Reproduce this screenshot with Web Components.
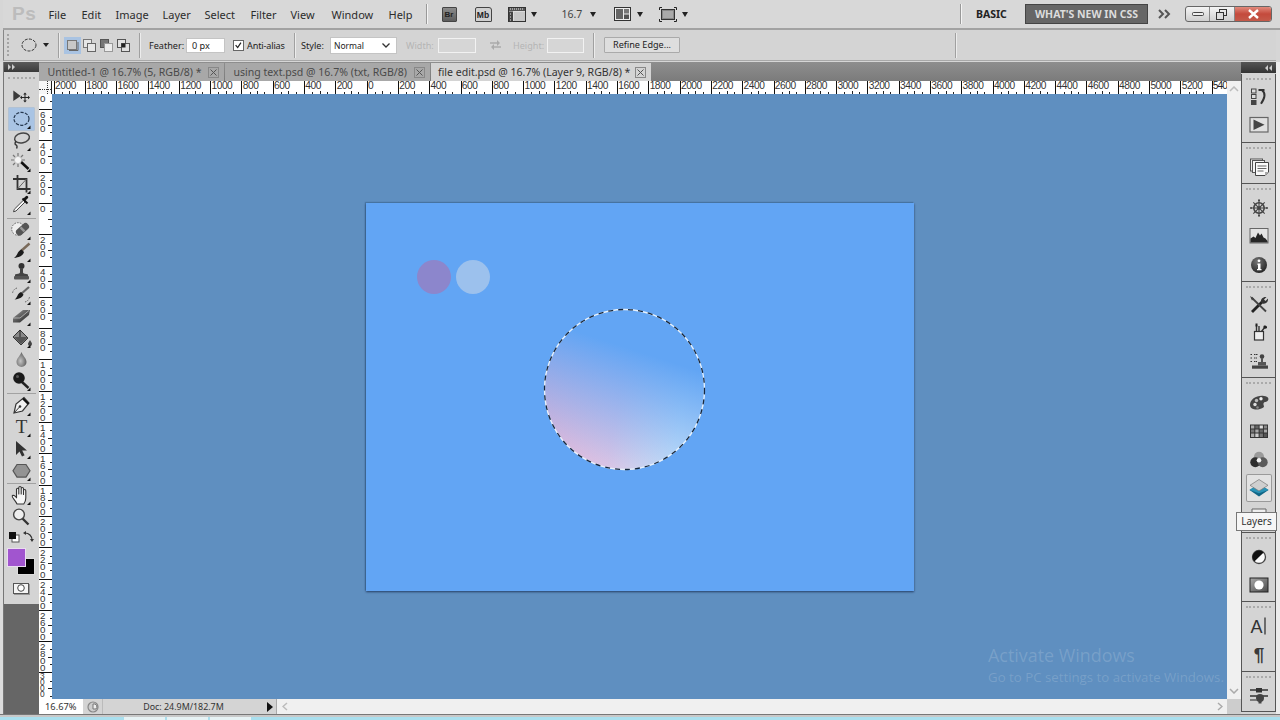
<!DOCTYPE html>
<html lang="en">
<head>
<meta charset="utf-8">
<title>Photoshop</title>
<style>
html,body{margin:0;padding:0;width:1280px;height:720px;overflow:hidden;background:#d6d6d6;font-family:"Noto Sans","Liberation Sans",sans-serif;font-size:10.5px;color:#222}
</style>
</head>
<body>
<ps-app>
  <ps-menubar>
    <ps-menu style="width:33px">File</ps-menu>
    <ps-menu style="width:34px">Edit</ps-menu>
    <ps-menu style="width:47px">Image</ps-menu>
    <ps-menu style="width:42px">Layer</ps-menu>
    <ps-menu style="width:46px">Select</ps-menu>
    <ps-menu style="width:40px">Filter</ps-menu>
    <ps-menu style="width:41px">View</ps-menu>
    <ps-menu style="width:57px">Window</ps-menu>
    <ps-menu style="width:37px">Help</ps-menu>
  </ps-menubar>
  <ps-options></ps-options>
  <ps-workspace>
    <ps-toolbox>
      <ps-tool name="move"></ps-tool>
      <ps-tool name="marquee" active more></ps-tool>
      <ps-tool name="lasso" more></ps-tool>
      <ps-tool name="wand" more></ps-tool>
      <ps-tool name="crop" more></ps-tool>
      <ps-tool name="dropper" more sep></ps-tool>
      <ps-tool name="heal" more></ps-tool>
      <ps-tool name="brush" more></ps-tool>
      <ps-tool name="stamp" more></ps-tool>
      <ps-tool name="hbrush" more></ps-tool>
      <ps-tool name="eraser" more></ps-tool>
      <ps-tool name="bucket" more></ps-tool>
      <ps-tool name="dodge"></ps-tool>
      <ps-tool name="burn" more sep></ps-tool>
      <ps-tool name="pen" more></ps-tool>
      <ps-tool name="type" more></ps-tool>
      <ps-tool name="path" more></ps-tool>
      <ps-tool name="shape" more sep></ps-tool>
      <ps-tool name="hand" more></ps-tool>
      <ps-tool name="zoom"></ps-tool>
    </ps-toolbox>
    <ps-docarea>
      <ps-tabs slot="tabs">
        <ps-tab style="width:185px">Untitled-1 @ 16.7% (5, RGB/8) *</ps-tab>
        <ps-tab style="width:205px">using text.psd @ 16.7% (txt, RGB/8)</ps-tab>
        <ps-tab style="width:220px" active>file edit.psd @ 16.7% (Layer 9, RGB/8) *</ps-tab>
      </ps-tabs>
      <ps-hruler slot="hruler"></ps-hruler>
      <ps-vruler slot="vruler"></ps-vruler>
      <ps-canvas slot="canvas"><ps-document></ps-document></ps-canvas>
      <ps-statusbar slot="status"></ps-statusbar>
    </ps-docarea>
    <ps-dock>
      <ps-dockgroup style="--pad:8.8px;height:68px"><ps-dockicon name="history"></ps-dockicon><ps-dockicon name="actions"></ps-dockicon></ps-dockgroup>
      <ps-dockgroup style="--pad:10.3px;height:40px"><ps-dockicon name="notes"></ps-dockicon></ps-dockgroup>
      <ps-dockgroup style="--pad:9.8px;height:97px"><ps-dockicon name="navigator"></ps-dockicon><ps-dockicon name="histogram"></ps-dockicon><ps-dockicon name="info"></ps-dockicon></ps-dockgroup>
      <ps-dockgroup style="--pad:7.8px;height:95px"><ps-dockicon name="tools"></ps-dockicon><ps-dockicon name="brushes"></ps-dockicon><ps-dockicon name="clone"></ps-dockicon></ps-dockgroup>
      <ps-dockgroup style="--pad:10.8px;height:154px"><ps-dockicon name="color"></ps-dockicon><ps-dockicon name="swatches"></ps-dockicon><ps-dockicon name="styles"></ps-dockicon><ps-dockicon name="layers" active></ps-dockicon><ps-dockicon name="channels"></ps-dockicon></ps-dockgroup>
      <ps-dockgroup style="--pad:9.8px;height:68px"><ps-dockicon name="adjust"></ps-dockicon><ps-dockicon name="masks"></ps-dockicon></ps-dockgroup>
      <ps-dockgroup style="--pad:9.8px;height:69px"><ps-dockicon name="char"></ps-dockicon><ps-dockicon name="para"></ps-dockicon></ps-dockgroup>
      <ps-dockgroup style="--pad:8.8px;height:39px"><ps-dockicon name="presets"></ps-dockicon></ps-dockgroup>
      <ps-tooltip>Layers</ps-tooltip>
    </ps-dock>
  </ps-workspace>
  <ps-taskstrip></ps-taskstrip>
</ps-app>
<script>
const CORNER='<path d="M21.5 17.5v3.5h-3.5z" fill="#111"/>';
const TOOL={
move:'<path d="M4.3 3.5v10.500l7.400-5z" fill="#3a3a3a"/><path d="M16 7v7M12.500 10.500h7" stroke="#222" fill="none"/><path d="M16 5.500l-1.800 2h3.600zM16 15.500l-1.800-2h3.600zM11 10.500l2-1.800v3.600zM21 10.500l-2-1.800v3.600z" fill="#222"/>',
marquee:'<ellipse cx="12.500" cy="10.800" rx="7.500" ry="6.500" fill="none" stroke="#26384f" stroke-width="1.200" stroke-dasharray="3.200 1.300"/>',
lasso:'<ellipse cx="13" cy="8" rx="7.500" ry="4.800" transform="rotate(-12 13 8)" fill="none" stroke="#444" stroke-width="1.500"/><path d="M7 11.500c-1.500 1.500-1 3 0 3.500s1.500 2 .5 3.500" fill="none" stroke="#333" stroke-width="1.400"/>',
wand:'<path d="M10.500 9.500l9 8.500" stroke="#111" stroke-width="2.600"/><path d="M9 2v3M9 13v3M2 9h3M13 9h3M4 4l2 2M14 4l-2 2M4 14l2-2" stroke="#777" stroke-width="1.200"/><circle cx="9" cy="9" r="3.600" fill="#f4f4f4" stroke="#aaa" stroke-width=".6"/>',
crop:'<path d="M8.500 2v14h13M4 6h13.500v13.500" fill="none" stroke="#333" stroke-width="1.800"/><path d="M8.500 16l9-10" stroke="#666" stroke-width="1"/>',
dropper:'<path d="M16 8l-9 9-2.500.8.800-2.500 9-9z" fill="#fafafa" stroke="#444" stroke-width="1"/><path d="M13.500 4.500l5 5" stroke="#111" stroke-width="2"/><path d="M16 7l2.800-2.800a1.400 1.400 0 0 0-2-2L14 5z" fill="#111"/>',
heal:'<circle cx="9" cy="10" r="6.300" fill="#eee" stroke="#666" stroke-dasharray="1.600 1.200"/><rect x="6" y="6.800" width="15" height="7" rx="3.300" transform="rotate(-42 13.500 10.300)" fill="#555"/><path d="M11.500 8.300l4 4" stroke="#999" stroke-width="2.400"/>',
brush:'<path d="M20.500 2.500l-9 8" stroke="#7a6a5a" stroke-width="2.400"/><path d="M12.500 8.500l2.500 2.500c-1 3-3 5-10 6 2.500-1.500 3-4 4-5.500 1-1.500 2-2.500 3.500-3z" fill="#1c1c1c"/>',
stamp:'<circle cx="12.500" cy="4" r="3" fill="#333"/><path d="M11 6h3v4.500c0 1 3 1.500 5 2v1.500H6v-1.500c2-.5 5-1 5-2z" fill="#444"/><rect x="5" y="14" width="15" height="3.600" rx="1" fill="#555"/>',
hbrush:'<path d="M20 3l-8 7" stroke="#666" stroke-width="2.200"/><path d="M12 8l2.500 2.500c-1 2.500-3 4.500-9 5 2-1.200 2.800-3.500 3.500-5 .7-1.200 1.700-2 3-2.500z" fill="#1c1c1c"/><path d="M8 4c-3 1-4.500 3-4.500 6M16 18c2-.5 4-2 4.500-5" fill="none" stroke="#666" stroke-dasharray="1.500 1.200"/>',
eraser:'<defs><linearGradient id="e" x1="0" y1="0" x2="1" y2="1"><stop offset="0" stop-color="#999"/><stop offset="1" stop-color="#1c1c1c"/></linearGradient></defs><path d="M4 13L14 5h7l-1 5-9 7.500H4z" fill="url(#e)"/><path d="M4 13h7l9-7.500" fill="none" stroke="#ccc" stroke-width=".7"/>',
bucket:'<path d="M11 3l8 8-7 7-8-8z" fill="#888" stroke="#333"/><path d="M5 10h14l-7 7z" fill="#555"/><path d="M11 3v7" stroke="#222"/><path d="M21 13c-1 2-2 3-2 4a2 2 0 0 0 4 0c0-1-1-2-2-4z" fill="#444"/>',
dodge:'<defs><radialGradient id="d" cx=".4" cy=".6" r=".7"><stop offset="0" stop-color="#c4c4c4"/><stop offset="1" stop-color="#505050"/></radialGradient></defs><path d="M12.500 3c-1.500 4-5 6.500-5 10a5 5 0 0 0 10 0c0-3.500-3.500-6-5-10z" fill="url(#d)"/>',
burn:'<path d="M13 12l6.500 6" stroke="#222" stroke-width="2.400"/><circle cx="10" cy="8" r="5.800" fill="#1a1a1a"/><circle cx="8.500" cy="6.500" r="1.500" fill="#555"/>',
pen:'<path d="M5 18l2-9 8-6.500 5 5.500-6.500 8z" fill="#f2f2f2" stroke="#333" stroke-width="1.200"/><path d="M5 18l5.500-6" stroke="#333"/><circle cx="11" cy="11.500" r="1.300" fill="#333"/><path d="M14 3.500l5.500 5.500" stroke="#111" stroke-width="2.200"/>',
type:'<text x="12.500" y="17.500" text-anchor="middle" font-family="Liberation Serif,serif" font-size="19" fill="#333">T</text>',
path:'<path d="M7 3v14l3.500-3.500L13 18.500l2.600-1.200-2.400-4.800H18z" fill="#333"/>',
shape:'<path d="M8 4.500h9l4 6.300-4 6.300H8L4 10.800z" fill="#939393" stroke="#555" stroke-width="1.200"/>',
hand:'<path d="M8 20C6 16 2.800 13.500 3.200 12c.7-1.500 3-.2 4.300 1.800V5.500c0-1.700 2.300-1.700 2.300 0V10V3.800c0-1.700 2.400-1.700 2.400 0V10V4.800c0-1.700 2.300-1.700 2.300 0V10.500V6.800c0-1.700 2.300-1.700 2.300 0V14c0 2.500-.8 4.500-2 6z" fill="#f6f6f6" stroke="#333" stroke-width="1.100" stroke-linejoin="round"/>',
zoom:'<path d="M13.500 12.500l6 6" stroke="#333" stroke-width="2.400"/><circle cx="10" cy="8.500" r="5.400" fill="#eee" stroke="#444" stroke-width="1.400"/>'
};
const DOCK={
history:'<rect x="4.500" y="2" width="4.500" height="4" fill="#ddd" stroke="#444"/><rect x="4.500" y="7.500" width="4.500" height="4" fill="#ddd" stroke="#444"/><rect x="4" y="13" width="5.500" height="5" fill="#444"/><path d="M11.500 3h6M15 3.200c3.500 2.500 3 7.500-1 13.500" fill="none" stroke="#333" stroke-width="2"/>',
actions:'<rect x="3" y="2.500" width="18" height="14.500" fill="#e0e0e0" stroke="#666" stroke-width="1.200"/><path d="M6.500 4.500l11 5.200-11 5.300z" fill="#444"/>',
notes:'<rect x="3.500" y="2" width="12" height="12" fill="#eee" stroke="#555"/><rect x="5.500" y="3.500" width="12" height="12" fill="#f4f4f4" stroke="#555"/><path d="M8.500 5.500h13v9.500l-3.500 3.500H8.500z" fill="#fafafa" stroke="#444"/><path d="M10.500 9h9M10.500 11.500h9M10.500 14h6" stroke="#666"/><path d="M21.500 15h-3.500v3.500z" fill="#aaa"/>',
navigator:'<g stroke="#444" fill="none"><circle cx="12" cy="10" r="5.200" stroke-width="1.600"/><path d="M12 2v16M4 10h16M6.300 4.300l11.400 11.400M17.700 4.300L6.300 15.700" stroke-width="1.100"/></g><circle cx="12" cy="10" r="1.800" fill="#444"/><circle cx="12" cy="2.200" r="1" fill="#444"/><circle cx="12" cy="17.800" r="1" fill="#444"/><circle cx="4" cy="10" r="1" fill="#444"/><circle cx="20" cy="10" r="1" fill="#444"/>',
histogram:'<rect x="3" y="2.500" width="18" height="14.500" fill="#e4e4e4" stroke="#666"/><path d="M3.500 16.500V12.500l3-2 2 1.500L11 6.500l2 3 1.500-2 2 4 2 1 2 2.500v1.500z" fill="#262626"/>',
info:'<defs><radialGradient id="ig" cx=".4" cy=".3" r=".8"><stop offset="0" stop-color="#777"/><stop offset="1" stop-color="#1c1c1c"/></radialGradient></defs><circle cx="12" cy="10" r="8" fill="url(#ig)"/><circle cx="12" cy="5.800" r="1.400" fill="#fff"/><path d="M10.500 8.500h3V14h1v1.300h-4.500V14h1V10h-.5z" fill="#fff"/>',
tools:'<path d="M5 18L15 8" stroke="#222" stroke-width="2.800"/><path d="M4.500 3.500l14.500 14" stroke="#444" stroke-width="1.800"/><path d="M14 8c-.5-3 2-5.500 5.500-5l-2.500 2.500 1.500 1.500L21 4.500c.5 3.500-2.500 6-5.500 5z" fill="#333"/><path d="M3 2l4 2.500L5 6.500z" fill="#444"/>',
brushes:'<rect x="7.500" y="9.500" width="9" height="8.500" fill="#eee" stroke="#333" stroke-width="1.200"/><path d="M9.500 9.500V3M12 9.500V4M14.500 9.500L18 5" stroke="#333" stroke-width="1.400"/><path d="M8.500 1.500h2v3h-2zM16.500 4c2-1 4 0 3.500 2-1 1-3 1-3.500 0z" fill="#222"/>',
clone:'<path d="M3.500 3.500h2M3.500 7h2M3.500 10.500h2M7 3.500h4M7 7h3M7 10.500h3" stroke="#333" stroke-width="1.200" stroke-dasharray="1.500 .5"/><circle cx="15" cy="5.500" r="2.300" fill="#444"/><path d="M14 7h2v4h3v3.500h-8V11h3z" fill="#555"/><rect x="5" y="14.500" width="16" height="3.200" fill="#444"/>',
color:'<path d="M3 12C3 6 10 2 17 3c4.500.7 5.500 3 3.500 5-2 1.500-3.500.5-4 2.500s2 3-1 4.500c-3 2-12 3-12.500-3z" fill="#444"/><circle cx="8" cy="11.500" r="1.700" fill="#ddd"/><circle cx="9.500" cy="7.500" r="1.700" fill="#bbb"/><circle cx="14" cy="5.800" r="1.700" fill="#eee"/><circle cx="10.500" cy="14.500" r="1.300" fill="#888"/>',
swatches:'<rect x="3" y="3.500" width="18" height="13.500" fill="#333"/><g fill="#aaa"><rect x="4" y="4.500" width="3.300" height="3"/><rect x="8.300" y="4.500" width="3.300" height="3" fill="#666"/><rect x="12.600" y="4.500" width="3.300" height="3" fill="#ddd"/><rect x="16.900" y="4.500" width="3.200" height="3" fill="#888"/><rect x="4" y="8.500" width="3.300" height="3" fill="#777"/><rect x="8.300" y="8.500" width="3.300" height="3"/><rect x="12.600" y="8.500" width="3.300" height="3" fill="#666"/><rect x="16.900" y="8.500" width="3.200" height="3" fill="#aaa"/><rect x="4" y="12.500" width="3.300" height="3.500"/><rect x="8.300" y="12.500" width="3.300" height="3.500" fill="#ccc"/><rect x="12.600" y="12.500" width="3.300" height="3.500" fill="#777"/><rect x="16.900" y="12.500" width="3.200" height="3.500" fill="#555"/></g>',
styles:'<circle cx="12" cy="6.800" r="5" fill="#9a9a9a"/><circle cx="8.300" cy="12.300" r="5" fill="#2e2e2e"/><circle cx="15.700" cy="12.300" r="5" fill="#5a5a5a"/><circle cx="12" cy="10.300" r="2.300" fill="#f4f4f4"/>',
layers:'<path d="M12 6L21.500 12 12 18.500 2.500 12z" fill="#126687"/><path d="M12 6l9.500 6-9.500 3.300L2.500 12z" fill="#2a93b6"/><path d="M12 1.500l9 5.800-9 5.700-9-5.700z" fill="#cfcfcf" stroke="#777" stroke-width=".7"/>',
channels:'<path d="M5 2h14v5H5z" fill="#eee" stroke="#666"/>',
adjust:'<circle cx="12" cy="10" r="6.500" fill="#fafafa" stroke="#444" stroke-width="1.300"/><path d="M7.400 14.600A6.500 6.500 0 0 1 16.600 5.400z" fill="#111"/>',
masks:'<defs><linearGradient id="mg" x1="0" y1="0" x2="1" y2="1"><stop offset="0" stop-color="#aaa"/><stop offset="1" stop-color="#4a4a4a"/></linearGradient></defs><rect x="3" y="3" width="18" height="14" fill="url(#mg)" stroke="#222"/><circle cx="12" cy="10" r="4.600" fill="#fff"/>',
char:'<text x="3.500" y="17" font-family="Liberation Sans,sans-serif" font-size="18" fill="#333">A</text><path d="M18 1.500v17" stroke="#333" stroke-width="1.300"/>',
para:'<text x="12" y="17" text-anchor="middle" font-family="Liberation Sans,sans-serif" font-weight="bold" font-size="19" fill="#3a3a3a">¶</text>',
presets:'<path d="M3 5h7M3 11h7M16 11h5M15 5h6" stroke="#333" stroke-width="1.600"/><rect x="9" y="3" width="6" height="4.500" fill="#333"/><circle cx="13" cy="13" r="4" fill="#444"/><path d="M3 15h7" stroke="#666" stroke-width="1.600"/><rect x="11.500" y="16" width="3" height="2.500" fill="#444"/>'
};
function def(tag,html,init){
  customElements.define(tag,class extends HTMLElement{
    constructor(){super();this.attachShadow({mode:'open'}).innerHTML=html;}
    connectedCallback(){if(init)init(this);}
  });
}
def('ps-app',`<style>:host{display:flex;flex-direction:column;width:1280px;height:720px;background:#d6d6d6;position:relative;overflow:hidden}</style><slot></slot>`);

const tri=(ml)=>`<span class="tri" style="margin-left:${ml}px"></span>`;
def('ps-menubar',`<style>
:host{display:flex;align-items:center;height:28px;flex:none;border-bottom:2px solid #a2a2a2;background:#d8d8d8;margin-left:3px;font-size:11px;color:#2c2c2c}
.logo{width:45.500px;flex:none;box-sizing:border-box;padding-left:9px;font:bold 19px "Liberation Sans",sans-serif;color:#bcbcbc;letter-spacing:.5px}
.sep{flex:none;width:1px;height:20px;background:#999;box-shadow:1px 0 0 #f4f4f4}
.ic{flex:none;display:block}
.tri{flex:none;width:0;height:0;border:3.500px solid transparent;border-top:5px solid #222;border-bottom:0}
.txt{flex:none;color:#444}
.br{flex:none;width:15px;height:15px;margin-left:15px;background:linear-gradient(#8c8c8c,#5c5c5c);border:1px solid #444;box-sizing:border-box;border-radius:1px;font:bold 8px/13px "Liberation Sans",sans-serif;text-align:center;color:#222}
.mb{flex:none;width:17px;height:15px;margin-left:18px;background:#d0d0d0;border:1px solid #444;box-sizing:border-box;border-radius:2px 3px 1px 1px;font:bold 8.500px/14px "Liberation Sans",sans-serif;text-align:center;color:#222}
.basic{flex:none;font-weight:700;font-size:10.500px;color:#222;margin-left:15px;width:34px;white-space:nowrap}
.new{flex:none;width:123px;height:20px;margin-left:15px;box-sizing:border-box;background:#666;border:1px solid #444;font-weight:700;font-size:10.500px;line-height:18px;text-align:center;color:#dcdcdc;white-space:nowrap}
.win{flex:none;margin-left:13px;display:flex;height:16px;width:87px;border:1px solid #666;box-sizing:border-box;border-radius:3px;overflow:hidden;background:linear-gradient(#f4f4f4,#cfcfcf)}
.win div{display:flex;align-items:center;justify-content:center;border-right:1px solid #888}
.close{flex:1;background:linear-gradient(#e28a7c,#c44a3c 50%,#c45a4a);border:0!important}
</style>
<div class="logo">Ps</div><slot></slot>
<div class="sep"></div>
<div class="br">Br</div><div class="mb">Mb</div>
<svg class="ic" style="margin-left:16px" width="18" height="15" viewBox="0 0 18 15"><rect x=".5" y=".5" width="17" height="14" fill="#ddd" stroke="#333"/><rect x="1" y="1" width="16" height="3" fill="#555"/><rect x="1" y="4.500" width="4" height="10" fill="#444"/><rect x="6" y="5" width="11" height="9" fill="#c8c8c8"/><path d="M2 2h14M2 7h2M2 10h2M2 13h2" stroke="#eee" stroke-dasharray="1 1"/></svg>
${tri(5)}
<div class="txt" style="margin-left:25px;width:21px;font-size:10.500px">16.7</div>
${tri(7)}
<svg class="ic" style="margin-left:18px" width="17" height="14" viewBox="0 0 17 14"><rect x=".5" y=".5" width="16" height="13" fill="#eee" stroke="#333"/><rect x="2" y="2" width="7" height="10" fill="#666"/><rect x="10" y="2" width="5" height="4.500" fill="#777"/><rect x="10" y="7.500" width="5" height="4.500" fill="#555"/></svg>
${tri(6)}
<svg class="ic" style="margin-left:16px" width="18" height="15" viewBox="0 0 18 15"><path d="M.5 3V.5H3M15 .5h2.500V3M.5 12v2.500H3M15 14.500h2.500V12" fill="none" stroke="#222"/><rect x="2.500" y="2.500" width="13" height="10" fill="#888" stroke="#333"/><rect x="4" y="4" width="10" height="7" fill="#aaa"/></svg>
${tri(5)}
<div class="sep" style="margin-left:272px;width:1.500px"></div>
<div class="basic">BASIC</div>
<div class="new">WHAT'S NEW IN CSS</div>
<svg class="ic" style="margin-left:10px" width="14" height="10" viewBox="0 0 14 10"><path d="M1 1l4 4-4 4M7 1l4 4-4 4" fill="none" stroke="#555" stroke-width="2"/></svg>
<div class="win"><div style="width:23px"><svg width="12" height="6"><rect x=".5" y="1.500" width="11" height="3" rx="1" fill="#eee" stroke="#444"/></svg></div><div style="width:24px"><svg width="12" height="11"><rect x="3.500" y=".5" width="7" height="6" fill="none" stroke="#333"/><rect x=".5" y="3.500" width="7" height="7" fill="#ddd" stroke="#333"/></svg></div><div class="close"><svg width="13" height="10" viewBox="0 0 13 10"><path d="M2 1l9 8M11 1L2 9" stroke="#fff" stroke-width="2.400"/></svg></div></div>`);
def('ps-menu',`<style>:host{display:block;flex:none;white-space:nowrap}</style><slot></slot>`);

const optMode=(svg)=>`<div class="mode"><svg width="13" height="13" viewBox="0 0 13 13">${svg}</svg></div>`;
def('ps-options',`<style>
:host{display:flex;align-items:center;height:30px;flex:none;border-bottom:1px solid #a8a8a8;border-left:1px solid #888;background:#d4d4d4;margin-left:3px;margin-right:4px;font-size:9.100px;color:#222;white-space:nowrap}
.g{flex:none;width:1px;height:22px;border-left:2px dotted #a4a4a4;margin-left:3px}
.s{flex:none;width:1px;height:25px;background:#a0a0a0;box-shadow:1px 0 0 #ececec}
.t{flex:none}
.dim{color:#b4b4b4}
.mode{flex:none;width:17px;height:17px;display:flex;align-items:center;justify-content:center}
.mode.on{background:#a9c3e2}
.in{flex:none;box-sizing:border-box;height:15px;background:#fff;border:1px solid #c4c4c4;line-height:13px;padding-left:5px;font-size:9.100px}
.off{background:#d6d6d6;border:1px solid #f2f2f2}
.ck{flex:none;box-sizing:border-box;width:11px;height:11px;background:#fff;border:1px solid #666;display:block}
.sel{flex:none;box-sizing:border-box;height:17px;width:67px;background:#fff;border:1px solid #c4c4c4;display:flex;align-items:center;justify-content:space-between;padding:0 6px 0 3px;font-size:8.500px}
.btn{flex:none;box-sizing:border-box;width:76px;height:16px;border:1px solid #aaa;background:#dedede;border-radius:1px;text-align:center;line-height:13px;font-size:9.100px}
</style>
<div class="g"></div>
<svg style="margin-left:11px;flex:none" width="16" height="14" viewBox="0 0 16 14"><ellipse cx="8" cy="7" rx="7" ry="6" fill="none" stroke="#333" stroke-dasharray="3 1.300"/></svg>
<svg style="margin-left:6px;flex:none" width="6" height="4"><path d="M0 0h6L3 4z" fill="#222"/></svg>
<div class="s" style="margin-left:9px"></div>
<div class="mode on" style="margin-left:5px"><svg width="13" height="13"><rect x="1.500" y="1.500" width="9" height="9" fill="#c8c8c8" stroke="#777"/><path d="M3 11.500h9V3" stroke="#666" fill="none"/></svg></div>
${optMode('<rect x=".5" y=".5" width="8" height="8" fill="#e6e6e6" stroke="#777"/><rect x="4.500" y="4.500" width="8" height="8" fill="#e6e6e6" stroke="#666"/>')}
${optMode('<rect x=".5" y=".5" width="8" height="8" fill="#777" stroke="#555"/><rect x="4.500" y="4.500" width="8" height="8" fill="#ececec" stroke="#999"/>')}
${optMode('<rect x=".5" y=".5" width="8" height="8" fill="#e0e0e0" stroke="#555"/><rect x="4.500" y="4.500" width="8" height="8" fill="#e0e0e0" stroke="#555"/><rect x="4.500" y="4.500" width="4" height="4" fill="#222"/>')}
<div class="s" style="margin-left:7px"></div>
<div class="t" style="margin-left:9px;width:36px">Feather:</div>
<div class="in" style="margin-left:1px;width:39px">0 px</div>
<svg class="ck" style="margin-left:8px" viewBox="0 0 11 11"><path d="M2 5l2.500 3L8.500 2" fill="none" stroke="#222" stroke-width="1.500"/></svg>
<div class="t" style="margin-left:3px;width:39px;letter-spacing:-.15px">Anti-alias</div>
<div class="s" style="margin-left:8px"></div>
<div class="t" style="margin-left:6px;width:25px">Style:</div>
<div class="sel" style="margin-left:4px"><span>Normal</span><svg width="8" height="5"><path d="M.5 .5L4 4 7.500 .5" fill="none" stroke="#333" stroke-width="1.300"/></svg></div>
<div class="t dim" style="margin-left:9px;width:27px">Width:</div>
<div class="in off" style="margin-left:5px;width:38px"></div>
<svg style="margin-left:14px;flex:none" width="11" height="10" viewBox="0 0 11 10"><path d="M0 3h8M11 7H3" stroke="#aaa" stroke-width="1.400"/><path d="M7 0l3 3-3 3zM4 4L1 7l3 3z" fill="#aaa"/></svg>
<div class="t dim" style="margin-left:12px;width:30px">Height:</div>
<div class="in off" style="margin-left:4px;width:37px"></div>
<div class="s" style="margin-left:9px"></div>
<div class="btn" style="margin-left:10px">Refine Edge...</div>
<div class="s" style="margin-left:275px"></div>`);

def('ps-workspace',`<style>
:host{display:flex;flex:1;min-height:0;padding-top:1px;box-sizing:border-box}
.edge{flex:none;width:3px;background:#dcdcdc;border-right:1px solid #777;box-sizing:content-box}
.edge2{flex:none;width:4px;background:#ececec}
</style><div class="edge"></div><slot></slot><div class="edge2"></div>`);

def('ps-toolbox',`<style>
:host{display:flex;flex-direction:column;flex:none;width:34.500px;margin-right:.5px;background:#666}
.h{height:10px;flex:none;background:linear-gradient(#5a5a5a,#3a3a3a);display:flex;align-items:center;padding-left:4px}
.b{flex:none;background:#d4d4d4;height:532px;box-sizing:border-box;padding-top:3.500px;display:flex;flex-direction:column}
.grip{height:2px;flex:none;margin:1px 4px 8px;border-top:2px dotted #aaa;box-sizing:border-box}
.tools{flex:none;display:flex;flex-direction:column;margin-left:5px;width:25px}
.row{flex:none;display:flex;align-items:center;height:13px;margin-top:3.500px;margin-left:4px}
.sw{flex:none;position:relative;height:27px;margin-top:4px;margin-left:3px}
.fg,.bgc{position:absolute;box-sizing:border-box}
.bgc{left:10px;top:10px;width:18px;height:17px;background:#000;border:1px solid #ddd}
.fg{left:0;top:0;width:19px;height:19px;background:#a155cf;border:1px solid #eadcf0}
.qm{flex:none;width:16px;height:11px;margin:8px 0 0 9px;box-sizing:border-box;border:1px solid #555;background:#f4f4f4;display:flex;align-items:center;justify-content:center;box-shadow:1px 1px 0 #999}
</style>
<div class="h"><svg width="8" height="6"><path d="M0 0l3 3-3 3zM4 0l3 3-3 3z" fill="#ccc"/></svg></div>
<div class="b"><div class="grip"></div><div class="tools"><slot></slot></div>
<div class="row"><svg width="26" height="13" viewBox="0 0 26 13"><rect x="4" y="4" width="7" height="7" fill="#fff" stroke="#555"/><rect x="1" y="1" width="7" height="7" fill="#111"/><path d="M17 2c4 0 7 3 7 7" fill="none" stroke="#333" stroke-width="1.200"/><path d="M15 2l3-2v4zM24 11l-2-3h4z" fill="#333"/></svg></div>
<div class="sw"><div class="bgc"></div><div class="fg"></div></div>
<div class="qm"><svg width="8" height="8"><circle cx="4" cy="4" r="3.300" fill="#fff" stroke="#444"/></svg></div>
</div>`);

def('ps-tool',`<style>
:host{display:block;flex:none;height:21.600px;width:25px}
:host([active]){background:#a9c4e4;box-shadow:0 0 0 .5px #8fb0d4}
:host([sep]){height:24.600px}
svg{display:block}
.l{height:1px;background:#a2a2a2;margin:1.500px -2px 0}
</style><svg width="25" height="21.600" viewBox="0 0 25 21.600" id="s"></svg><div class="l" id="l"></div>`,(el)=>{
  const n=el.getAttribute('name');
  el.shadowRoot.getElementById('s').innerHTML=TOOL[n]+(el.hasAttribute('more')?CORNER:'');
  if(!el.hasAttribute('sep')){const l=el.shadowRoot.getElementById('l');if(l)l.remove();}
});

def('ps-docarea',`<style>
:host{display:grid;flex:none;width:1202px;grid-template-columns:13px 1175px 14px;grid-template-rows:19px 13px 605px 15px}
::slotted([slot=tabs]){grid-column:1/4;grid-row:1}
::slotted([slot=hruler]){grid-column:1/3;grid-row:2}
::slotted([slot=vruler]){grid-column:1;grid-row:3}
::slotted([slot=canvas]){grid-column:2;grid-row:3}
::slotted([slot=status]){grid-column:1/4;grid-row:4}
.vs{grid-column:3;grid-row:2/4;background:#f0f0f0;display:flex;flex-direction:column;justify-content:space-between;align-items:center;padding:5px 0 5px;box-sizing:border-box}
</style>
<slot name="tabs"></slot><slot name="hruler"></slot><slot name="vruler"></slot><slot name="canvas"></slot>
<div class="vs"><svg width="10" height="6"><path d="M1 5l4-4 4 4" fill="none" stroke="#bbb" stroke-width="1.500"/></svg><svg width="10" height="6"><path d="M1 1l4 4 4-4" fill="none" stroke="#aaa" stroke-width="1.500"/></svg></div>
<slot name="status"></slot>`);

def('ps-tabs',`<style>:host{display:flex;background:linear-gradient(#8e8e8e,#7b7b7b);padding-top:1px;box-sizing:border-box;gap:1px}</style><slot></slot>`);
def('ps-tab',`<style>
:host{display:flex;flex:none;align-items:center;justify-content:space-between;box-sizing:border-box;height:18px;padding:0 5px 0 8.500px;background:#a8a8a8;font-size:10.550px;color:#4a4a4a;white-space:nowrap}
:host([active]){background:#d4d4d4;color:#333;padding-left:7px}
.x{flex:none;box-sizing:border-box;width:11px;height:11px;border:1px solid #888;display:flex;align-items:center;justify-content:center}
</style><span><slot></slot></span><span class="x"><svg width="7" height="7"><path d="M.5 .5l6 6M6.500 .5l-6 6" stroke="#555"/></svg></span>`);

def('ps-hruler',`<style>
:host{display:flex;background:#fff;overflow:hidden;box-sizing:border-box}
.c{flex:none;width:13px;height:13px;position:relative;background:#f6f6f6;border-right:1px solid #222;box-sizing:border-box}
.c:before{content:"";position:absolute;left:0;right:0;top:8px;border-top:1px dotted #333}
.c:after{content:"";position:absolute;top:0;bottom:0;left:8px;border-left:1px dotted #333}
.r{flex:1;display:flex;padding-left:1.700px;min-width:0}
.u{flex:none;box-sizing:border-box;width:31.300px;height:13px;border-left:1px solid #111;padding-left:.3px;font:10.200px/10px "Liberation Sans",sans-serif;letter-spacing:-.45px;color:#333;white-space:nowrap;
background:linear-gradient(#222,#222) 25% 100%/1px 2px no-repeat,linear-gradient(#222,#222) 50% 100%/1px 3px no-repeat,linear-gradient(#222,#222) 75% 100%/1px 2px no-repeat}
.u.last{width:14.500px;background:none;letter-spacing:-.85px;padding-left:0;color:#222}
</style><div class="c"></div><div class="r" id="r"></div>`,(el)=>{
  let h='';for(let k=0;k<37;k++)h+=`<div class="u">${Math.abs(2000-200*k)}</div>`;
  h+='<div class="u last">540</div>';
  el.shadowRoot.getElementById('r').innerHTML=h;
});
def('ps-vruler',`<style>
:host{display:block;background:#fff;overflow:hidden}
.u{box-sizing:border-box;height:31.300px;border-top:1px solid #111;width:13px;padding:1px 0 0 1px;font:9.800px/7.100px "Liberation Sans",sans-serif;color:#333;
background:linear-gradient(#222,#222) 100% 25%/2px 1px no-repeat,linear-gradient(#222,#222) 100% 50%/4px 1px no-repeat,linear-gradient(#222,#222) 100% 75%/2px 1px no-repeat}
.u.top{height:15.100px;border-top:0;background:linear-gradient(#222,#222) 100% 50%/2px 1px no-repeat}
.u.end{height:26.700px;font-size:8.400px;line-height:5.900px;background:linear-gradient(#222,#222) 100% 30%/2px 1px no-repeat,linear-gradient(#222,#222) 100% 60%/4px 1px no-repeat,linear-gradient(#222,#222) 100% 90%/2px 1px no-repeat}
.u span{display:block;width:6px;word-break:break-all}
</style><div id="r"></div>`,(el)=>{
  const v=[600,400,200,0];for(let i=1;i<=14;i++)v.push(i*200);
  el.shadowRoot.getElementById('r').innerHTML='<div class="u top"><span>0</span></div>'+v.map(n=>`<div class="u"><span>${n}</span></div>`).join('')+'<div class="u end"><span>3000</span></div>';
});

def('ps-canvas',`<style>
:host{display:flex;align-items:center;justify-content:center;position:relative;background:#5f8fc0;overflow:hidden;padding:1px 0 0 1px;box-sizing:border-box}
.w{position:absolute;left:936px;top:550px;color:rgba(255,255,255,.16);white-space:nowrap;font-family:"Open Sans","Noto Sans",sans-serif}
.a{font-size:17.900px;line-height:22px}
.b{font-size:13.250px;line-height:22px}
</style><slot></slot><div class="w"><div class="a">Activate Windows</div><div class="b">Go to PC settings to activate Windows.</div></div>`);

def('ps-document',`<style>
:host{display:block;flex:none;position:relative;width:548px;height:388px;background:#62a5f4;box-shadow:0 1px 2px rgba(15,35,70,.75),-1px -1px 1px rgba(40,80,120,.35)}
.c{position:absolute;border-radius:50%;width:34px;height:34px;top:57px}
.sel{position:absolute;left:178px;top:106px;width:161px;height:161px;border-radius:50%;
background:linear-gradient(198deg,#62a5f4 30%,rgba(98,165,244,0) 90%),linear-gradient(100deg,#e4b2d4,#dcc4e4 48%,#d2e6f8 82%)}
svg{position:absolute;left:176px;top:104px}
</style>
<div class="c" style="left:51px;background:#8c86cc"></div>
<div class="c" style="left:90px;background:#9cc1ed"></div>
<div class="sel"></div>
<svg width="165" height="165" viewBox="0 0 165 165"><circle cx="82.500" cy="82.500" r="80" fill="none" stroke="#e8f2fc" stroke-width="1.300"/><circle cx="82.500" cy="82.500" r="80" fill="none" stroke="#16283f" stroke-width="1.300" stroke-dasharray="5 5"/></svg>`);

def('ps-statusbar',`<style>
:host{display:flex;align-items:stretch;background:#d4d4d4;font-size:9.300px;color:#333;white-space:nowrap}
.z{flex:none;width:44px;background:#fff;padding-left:6px;box-sizing:border-box;line-height:15px}
.i{flex:none;width:20px;display:flex;align-items:center;justify-content:center;border-right:1px solid #bbb;box-sizing:border-box}
.d{flex:none;width:161px;text-align:center;line-height:15px;font-size:8.900px}
.a{flex:none;width:13px;display:flex;align-items:center;justify-content:center;border-right:1px solid #aaa;box-sizing:border-box}
.h{flex:1;background:#f0f0f0;display:flex;align-items:center;justify-content:space-between;padding:0 4px 0 5px}
.cr{flex:none;width:14px;background:#cdcdcd}
</style>
<div class="z">16.67%</div>
<div class="i"><svg width="12" height="12" viewBox="0 0 12 12"><circle cx="6" cy="6" r="5" fill="#ccc" stroke="#888" stroke-width="1.200"/><path d="M6 3v5h3a3 3 0 0 0-3-5z" fill="#eee" stroke="#777"/></svg></div>
<div class="d">Doc: 24.9M/182.7M</div>
<div class="a"><svg width="6" height="10"><path d="M0 0l6 5-6 5z" fill="#111"/></svg></div>
<div class="h"><svg width="6" height="9"><path d="M5 1L1 4.500 5 8" fill="none" stroke="#bbb" stroke-width="1.500"/></svg><svg width="6" height="9"><path d="M1 1l4 3.500L1 8" fill="none" stroke="#aaa" stroke-width="1.500"/></svg></div>
<div class="cr"></div>`);

def('ps-dock',`<style>
:host{display:flex;flex-direction:column;flex:none;width:35px;box-sizing:border-box;position:relative;background:#d4d4d4}
.h{flex:none;height:11px;background:linear-gradient(#555,#333);display:flex;align-items:center;justify-content:flex-end;padding-right:3px;margin-bottom:1px}
</style><div class="h"><svg width="8" height="6"><path d="M3 0L0 3l3 3zM7 0L4 3l3 3z" fill="#ccc"/></svg></div><slot></slot>`);
def('ps-dockgroup',`<style>
:host{display:block;flex:none;box-sizing:content-box;background:#d4d4d4;border-left:1px solid #555;border-right:1px solid #555;border-bottom:1px solid #555;position:relative}
.g{position:absolute;left:4px;right:4px;top:4px;border-top:2px dotted #aaa}
.b{padding-top:var(--pad)}
</style><div class="g"></div><div class="b"><slot></slot></div>`);
def('ps-dockicon',`<style>
:host{display:flex;align-items:center;justify-content:center;height:28.400px}
:host([active]){background:#e2e2e2;box-shadow:inset 0 0 0 1px #9a9a9a;margin:0 3.500px;border-radius:2px}
svg{display:block}
</style><svg width="24" height="20" viewBox="0 0 24 20" id="s"></svg>`,(el)=>{
  el.shadowRoot.getElementById('s').innerHTML=DOCK[el.getAttribute('name')];
});
def('ps-tooltip',`<style>
:host{display:block;position:absolute;left:-5px;top:450px;width:41px;height:19px;box-sizing:border-box;background:#f6f6f6;border:1px solid #777;font-size:10px;line-height:17px;text-align:center;color:#333}
</style><slot></slot>`);

def('ps-taskstrip',`<style>
:host{display:block;flex:none;height:6px;position:relative;background:#a9dfee;box-sizing:border-box;border-top:1px solid #777}
.l{height:2px;background:#c8c8c8}
.r{display:flex;height:3px;padding-left:124px;gap:2px}
.r i{display:block;width:41px;background:#e6f2f4}
</style><div class="l"></div><div class="r"><i></i><i></i><i></i></div>`);
</script>
</body>
</html>
